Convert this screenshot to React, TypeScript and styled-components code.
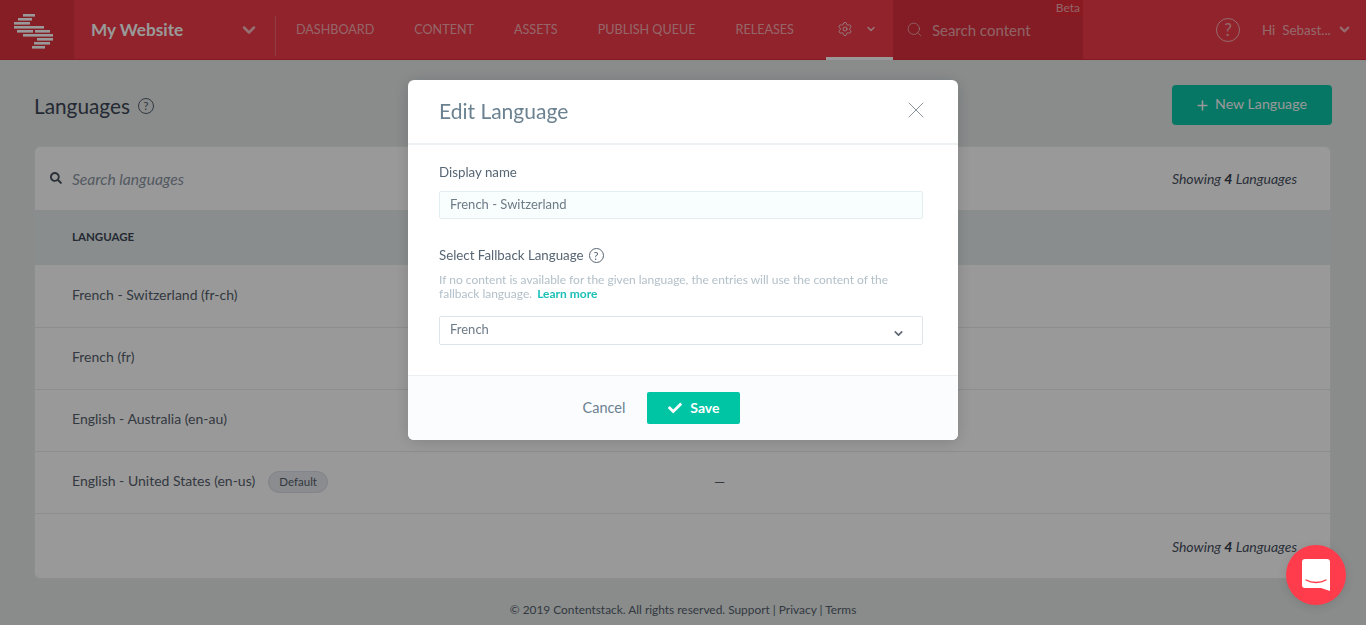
import React from 'react'
import styled, { createGlobalStyle } from 'styled-components'
import { FaCheck, FaSearch } from 'react-icons/fa'
import { ChevronDown, Plus, Search, Settings, X } from 'lucide-react'

const GlobalStyle = createGlobalStyle`
  html, body {
    margin: 0;
    height: 100%;
    overflow: hidden;
    background: #e4e9e8;
    font-family: "Lato", "Liberation Sans", sans-serif;
    color: #475161;
  }
  * { box-sizing: border-box; }
`

const Page = styled.div`
  width: 1366px;
  height: 625px;
  display: flex;
  flex-direction: column;
`

const TopBar = styled.header`
  height: 60px;
  flex: none;
  display: flex;
  align-items: stretch;
  background: #f03b49;
  border-bottom: 1px solid #dc2a38;
  color: #fff;
`

const LogoCell = styled.div`
  width: 74px;
  display: flex;
  align-items: center;
  background: #e0323f;
`

const SiteSwitch = styled.div`
  width: 202px;
  margin: 16px 0 3px;
  padding: 0 17px 13px;
  border-right: 1px solid rgba(255, 255, 255, 0.2);
  display: flex;
  align-items: center;
  justify-content: space-between;
  font-size: 17.2px;
  font-weight: 700;
  svg { margin-right: -1px; opacity: 0.65; }
`

const NavList = styled.nav`
  display: flex;
  align-items: center;
  margin-left: 20px;
  gap: 40px;
`

const NavItem = styled.span`
  font-size: 12.6px;
  font-weight: 400;
  color: rgba(255, 255, 255, 0.58);
`

const SettingsTab = styled.div`
  width: 67px;
  margin-left: 32px;
  padding-right: 5px;
  display: flex;
  align-items: center;
  justify-content: center;
  gap: 12px;
  color: rgba(255, 255, 255, 0.7);
  border-bottom: 3px solid #fff;
  height: 60px;
`

const SearchBox = styled.div`
  position: relative;
  width: 190px;
  display: flex;
  align-items: center;
  gap: 9px;
  padding: 0 13px;
  background: #db303d;
  color: rgba(255, 255, 255, 0.58);
  font-size: 15px;
`

const BetaTag = styled.span`
  position: absolute;
  top: 0;
  right: 0;
  width: 30px;
  height: 16px;
  background: #e62c3a;
  font-size: 12px;
  line-height: 15px;
  text-align: center;
  color: rgba(255, 255, 255, 0.6);
`

const UserArea = styled.div`
  margin-left: auto;
  display: flex;
  align-items: center;
  padding-right: 14px;
  color: rgba(255, 255, 255, 0.6);
`

const HelpRing = styled.span<{ $size: number }>`
  width: ${({ $size }) => $size}px;
  height: ${({ $size }) => $size}px;
  flex: none;
  display: inline-flex;
  align-items: center;
  justify-content: center;
  border: 1px solid currentColor;
  border-radius: 50%;
  font-size: ${({ $size }) => Math.round($size * 0.72)}px;
  line-height: 1;
`

const UserName = styled.span`
  margin-left: 22px;
  width: 75px;
  font-size: 13.4px;
  white-space: pre;
`

const Content = styled.main`
  flex: 1;
  padding: 25px 34px 0 34px;
  display: flex;
  flex-direction: column;
`

const TitleRow = styled.div`
  height: 61px;
  display: flex;
  justify-content: space-between;
  align-items: flex-start;
`

const PageTitle = styled.h1`
  margin: 8px 0 0;
  display: flex;
  align-items: center;
  gap: 8px;
  font-size: 20.8px;
  font-weight: 400;
  color: #3d4756;
  span { color: #56606c; }
`

const NewButton = styled.button`
  width: 160px;
  height: 40px;
  padding: 0 2.5px 3px 0;
  border: 0;
  border-radius: 4px;
  background: #00c5a5;
  color: #fff;
  font: 400 14.2px "Lato", sans-serif;
  display: flex;
  align-items: center;
  justify-content: center;
  gap: 5.5px;
  opacity: 0.95;
  svg { margin-top: 3px; }
`

const Card = styled.section`
  width: 1297px;
  height: 433px;
  background: #fff;
  border: 1px solid #e8ebee;
  border-radius: 6px;
  display: flex;
  flex-direction: column;
`

const CardTop = styled.div`
  height: 63px;
  flex: none;
  padding: 0 33px 0 15px;
  display: flex;
  align-items: center;
  justify-content: space-between;
`

const SearchLanguages = styled.div`
  display: flex;
  align-items: center;
  gap: 10px;
  font-size: 15.6px;
  font-style: italic;
  color: #8a96a3;
  svg { color: #4a5462; margin-top: -2px; }
`

const Count = styled.span`
  font-size: 14px;
  font-style: italic;
  color: #475161;
  b { font-weight: 700; color: #2f3948; }
`

const HeadRow = styled.div`
  height: 55px;
  margin-bottom: 1px;
  flex: none;
  padding: 0 37px 2px;
  display: flex;
  align-items: center;
  background: #e6ecec;
  font-size: 11.5px;
  font-weight: 700;
  color: #3d4756;
`

const LangRow = styled.div`
  height: 62px;
  flex: none;
  padding: 0 37px 5px;
  display: flex;
  align-items: center;
  border-bottom: 1px solid #e8ebee;
  font-size: 14px;
  color: #56606c;
`

const LangName = styled.span`
  width: 642px;
  display: flex;
  align-items: center;
  gap: 13px;
`

const EmptyValue = styled.span`
  padding-top: 2px;
`

const DefaultBadge = styled.span`
  width: 60px;
  height: 22px;
  border: 1px solid #d8dde3;
  border-radius: 11px;
  background: #e6e9ee;
  font-size: 11.5px;
  line-height: 20px;
  text-align: center;
  margin-top: 3px;
`

const CardBottom = styled.div`
  flex: 1;
  padding: 0 33px 0 0;
  display: flex;
  justify-content: flex-end;
  align-items: center;
`

const PageFooter = styled.footer`
  margin: 23px -34px 0;
  text-align: center;
  font-size: 11.9px;
  color: #56606c;
`

const Overlay = styled.div`
  position: fixed;
  inset: 0;
  background: rgba(0, 0, 0, 0.4);
  display: flex;
  justify-content: center;
  align-items: flex-start;
  padding-top: 80px;
`

const Modal = styled.div`
  width: 550px;
  height: 360px;
  background: #fff;
  border-radius: 6px;
  display: flex;
  flex-direction: column;
  overflow: hidden;
  box-shadow: 0 2px 16px rgba(0, 0, 0, 0.15);
`

const ModalHead = styled.div`
  height: 65px;
  flex: none;
  padding: 0 31px;
  display: flex;
  align-items: center;
  justify-content: space-between;
  border-bottom: 2px solid #eef1f4;
  svg { color: #8a939c; margin-right: -3px; margin-top: -3px; }
`

const ModalTitle = styled.h2`
  margin: 0 0 3px;
  font-size: 21px;
  font-weight: 400;
  color: #6c8291;
`

const ModalBody = styled.div`
  flex: 1;
  padding: 19px 35px 0 31px;
`

const FieldLabel = styled.label<{ $spaced?: boolean }>`
  display: flex;
  align-items: center;
  gap: 5px;
  height: 16px;
  margin-top: ${({ $spaced }) => ($spaced ? 28 : 0)}px;
  font-size: 13.3px;
  color: #566573;
`

const TextInput = styled.div`
  height: 28px;
  margin-top: 11px;
  padding: 0 10px 2px;
  display: flex;
  align-items: center;
  border: 1px solid #e3eef0;
  border-radius: 2px;
  background: #f8fdfd;
  font-size: 13px;
  color: #6d7b87;
`

const HelpText = styled.p`
  margin: 10px 0 0;
  font-size: 12px;
  line-height: 14px;
  color: #b3c0c9;
  a { margin-left: 2px; color: #1cc0b8; font-weight: 700; text-decoration: none; }
`

const SelectBox = styled.div`
  height: 29px;
  margin-top: 15px;
  padding: 0 17px 3px 10px;
  display: flex;
  align-items: center;
  justify-content: space-between;
  border: 1px solid #dfe3ea;
  border-radius: 2px;
  background: #fff;
  font-size: 13px;
  color: #6d7b87;
  svg { color: #5e6872; margin-top: 9px; }
`

const ModalFoot = styled.div`
  height: 65px;
  flex: none;
  display: flex;
  align-items: center;
  justify-content: center;
  gap: 22px;
  padding-right: 43px;
  background: #fafcfd;
  border-top: 1px solid #ebeff2;
`

const CancelLink = styled.span`
  font-size: 14.5px;
  color: #6c8291;
  padding-bottom: 1px;
`

const SaveButton = styled.button`
  width: 93px;
  height: 32px;
  padding: 0 0 1px;
  border: 0;
  border-radius: 2px;
  background: #00c5a5;
  color: #fff;
  font: 700 14px "Lato", sans-serif;
  display: flex;
  align-items: center;
  justify-content: center;
  gap: 8px;
`

const ChatBubble = styled.div`
  position: fixed;
  right: 20px;
  bottom: 20px;
  width: 60px;
  height: 60px;
  border-radius: 50%;
  background: #ff3c4b;
  display: flex;
  align-items: center;
  justify-content: center;
  box-shadow: 0 2px 10px rgba(0, 0, 0, 0.1);
`

const logoBars = [
  [23, 14, 12], [18, 18, 14], [14, 22, 16], [14, 26, 18], [32, 26, 12],
  [17, 30, 16], [35, 30, 15], [23, 34, 14], [37, 34, 16], [37, 38, 16],
  [34, 42, 16], [32, 46, 13],
]

const Logo = () => (
  <svg width="74" height="60" viewBox="0 0 74 60">
    {logoBars.map(([x, y, w]) => (
      <rect key={`${x}-${y}`} x={x} y={y} width={w} height="2.6" fill="#fff" />
    ))}
  </svg>
)

const ChatIcon = () => (
  <svg width="28" height="32" viewBox="0 0 28 32">
    <path d="M3 0h22a3 3 0 0 1 3 3v29l-9-3H3a3 3 0 0 1-3-3V3a3 3 0 0 1 3-3z" fill="#fff" />
    <path d="M4 21c6 3.4 14 3.4 20 0" stroke="#ff3c4b" strokeWidth="1.4" fill="none" strokeLinecap="round" />
  </svg>
)

const languages = [
  { name: 'French - Switzerland (fr-ch)' },
  { name: 'French (fr)' },
  { name: 'English - Australia (en-au)' },
  { name: 'English - United States (en-us)', isDefault: true },
]

const navLinks = ['DASHBOARD', 'CONTENT', 'ASSETS', 'PUBLISH QUEUE', 'RELEASES']

const App: React.FC = () => (
  <>
    <GlobalStyle />
    <Page>
      <TopBar>
        <LogoCell><Logo /></LogoCell>
        <SiteSwitch>
          My Website
          <ChevronDown size={20} strokeWidth={3} />
        </SiteSwitch>
        <NavList>
          {navLinks.map((link) => <NavItem key={link}>{link}</NavItem>)}
        </NavList>
        <SettingsTab>
          <Settings size={16} strokeWidth={1.5} />
          <ChevronDown size={12} strokeWidth={3} />
        </SettingsTab>
        <SearchBox>
          <Search size={17} strokeWidth={1.2} />
          Search content
          <BetaTag>Beta</BetaTag>
        </SearchBox>
        <UserArea>
          <HelpRing $size={24}>?</HelpRing>
          <UserName>{'Hi  Sebast...'}</UserName>
          <ChevronDown size={15} strokeWidth={3.5} />
        </UserArea>
      </TopBar>
      <Content>
        <TitleRow>
          <PageTitle>
            Languages
            <HelpRing $size={16}>?</HelpRing>
          </PageTitle>
          <NewButton>
            <Plus size={15} strokeWidth={2.5} />
            New Language
          </NewButton>
        </TitleRow>
        <Card>
          <CardTop>
            <SearchLanguages>
              <FaSearch size={12} />
              Search languages
            </SearchLanguages>
            <Count>Showing <b>4</b> Languages</Count>
          </CardTop>
          <HeadRow>LANGUAGE</HeadRow>
          {languages.map((lang) => (
            <LangRow key={lang.name}>
              <LangName>
                {lang.name}
                {lang.isDefault && <DefaultBadge>Default</DefaultBadge>}
              </LangName>
              {lang.isDefault && <EmptyValue>—</EmptyValue>}
            </LangRow>
          ))}
          <CardBottom>
            <Count>Showing <b>4</b> Languages</Count>
          </CardBottom>
        </Card>
        <PageFooter>© 2019 Contentstack. All rights reserved. Support | Privacy | Terms</PageFooter>
      </Content>
    </Page>
    <Overlay>
      <Modal>
        <ModalHead>
          <ModalTitle>Edit Language</ModalTitle>
          <X size={28} strokeWidth={0.85} />
        </ModalHead>
        <ModalBody>
          <FieldLabel>Display name</FieldLabel>
          <TextInput>French - Switzerland</TextInput>
          <FieldLabel $spaced>
            Select Fallback Language
            <HelpRing $size={15}>?</HelpRing>
          </FieldLabel>
          <HelpText>
            If no content is available for the given language, the entries will use the content of the
            fallback language. <a href="#learn">Learn more</a>
          </HelpText>
          <SelectBox>
            French
            <ChevronDown size={13} strokeWidth={3} />
          </SelectBox>
        </ModalBody>
        <ModalFoot>
          <CancelLink>Cancel</CancelLink>
          <SaveButton>
            <FaCheck size={14} />
            Save
          </SaveButton>
        </ModalFoot>
      </Modal>
    </Overlay>
    <ChatBubble><ChatIcon /></ChatBubble>
  </>
)

export default App
